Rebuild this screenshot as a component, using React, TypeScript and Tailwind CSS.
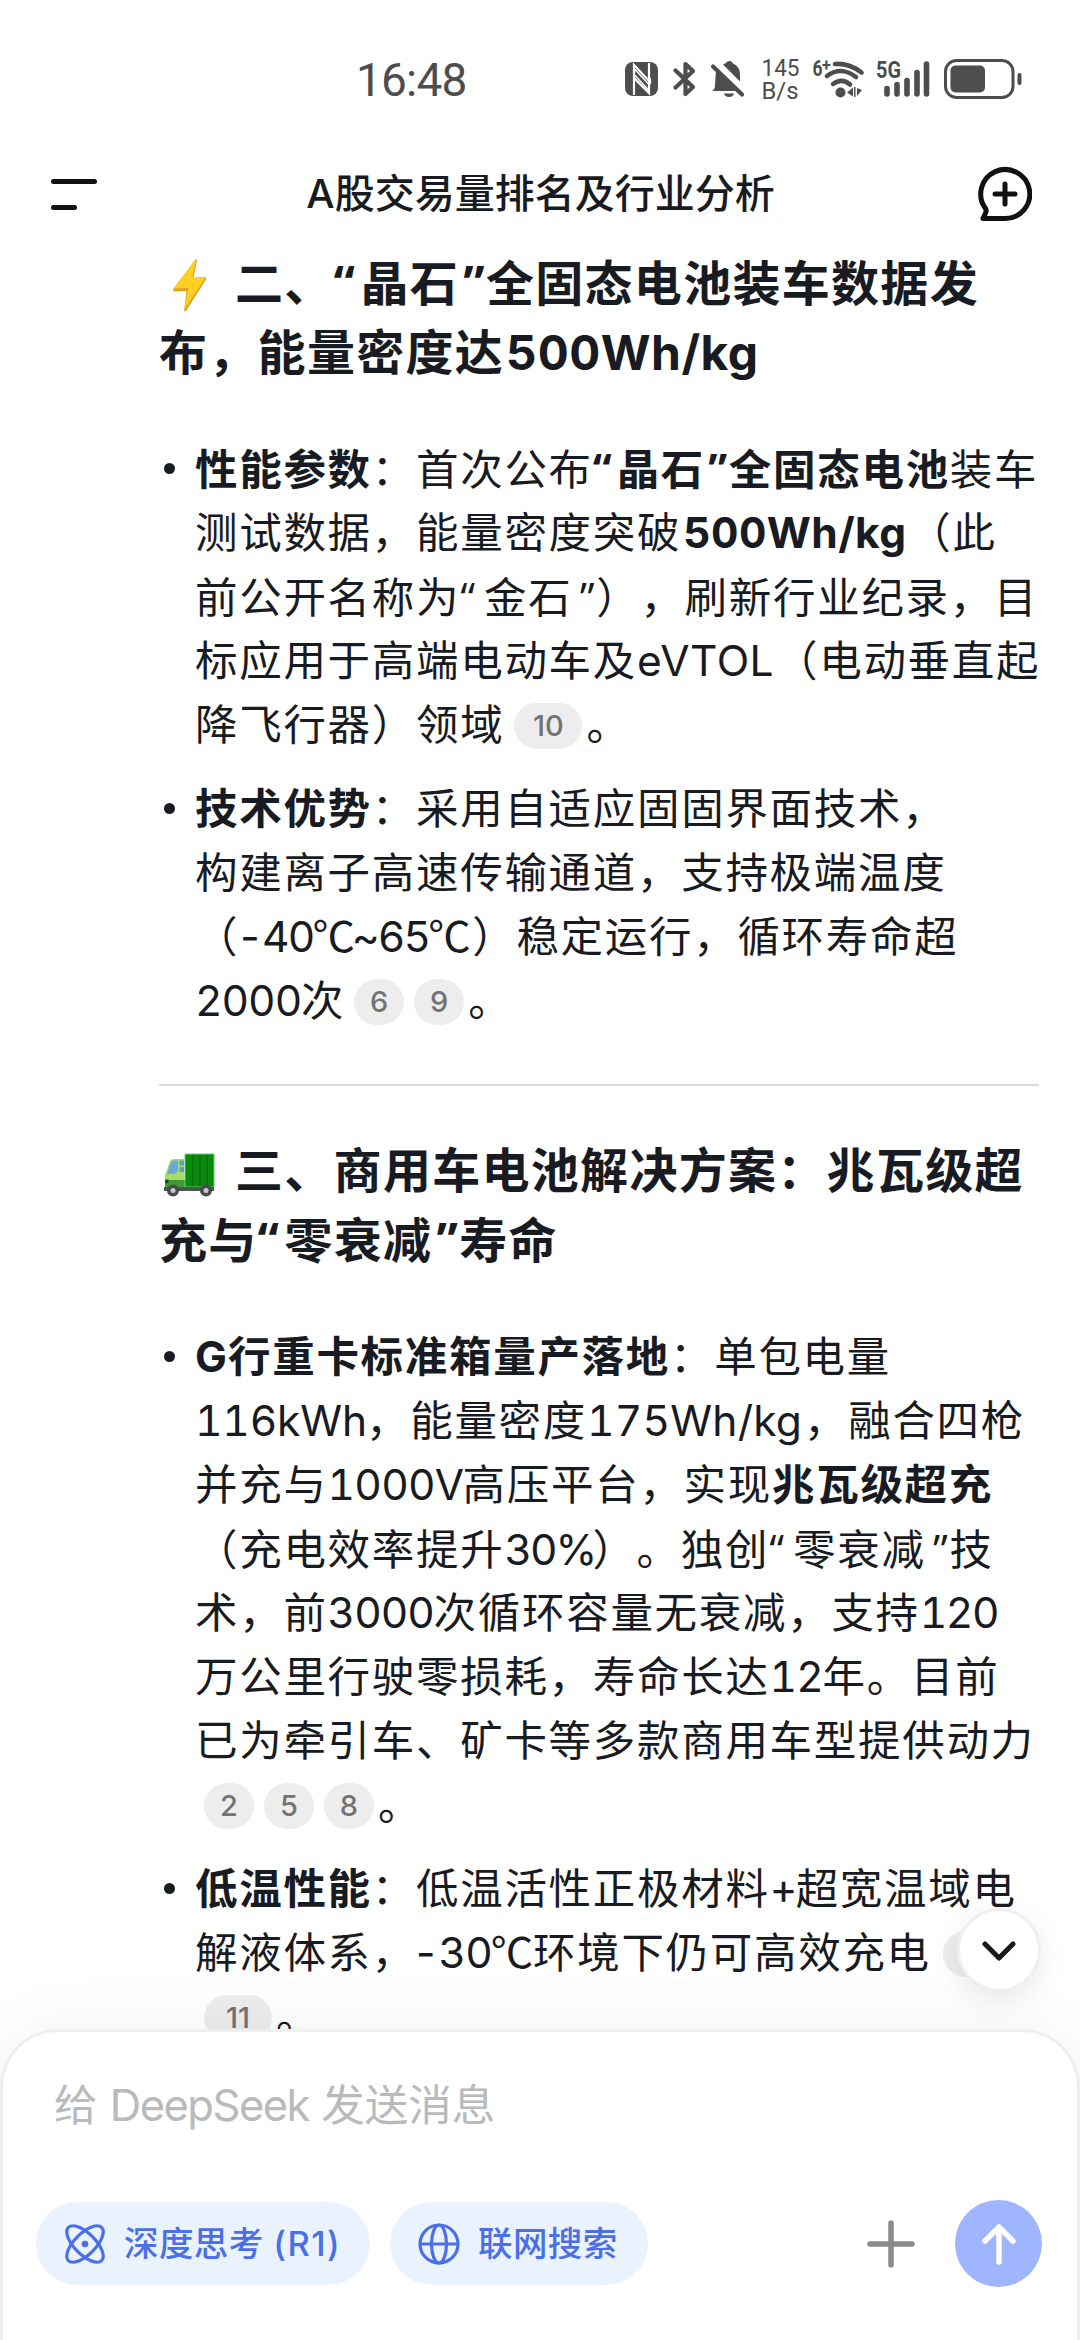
import type { ReactNode } from 'react';

function L({ className, children }: { className: string; children: ReactNode }) {
  return <span className={`inline-block tabular-nums ${className}`}>{children}</span>;
}

const Open = () => <span className="inline-block w-[0.56em] text-left font-['Open_Sans',sans-serif]">“</span>;
const Close = () => <span className="inline-block w-[0.56em] text-right font-['Open_Sans',sans-serif]">”</span>;
const Celsius = () => <span className="-ml-[1px] font-['Noto_Sans_CJK_SC',sans-serif] leading-none tracking-[-3px]">℃</span>;

const B = ({ children }: { children: ReactNode }) => <b className="font-bold">{children}</b>;

function Cite({ n }: { n: string }) {
  return (
    <span
      className={`mr-[10px] inline-flex h-[46px] items-center justify-center rounded-full bg-[#ededed] align-[4px] text-[29px] leading-[46px] font-medium tracking-normal text-[#737373] last:mr-[4px] ${
        n.length > 1 ? 'w-[68px]' : 'w-[50px]'
      }`}
    >
      {n}
    </span>
  );
}

const batteryItems: ReactNode[][] = [
  [
    <><B>性能参数</B>：首次公布<B><Open />晶石<Close />全固态电池</B>装车</>,
    <>测试数据，能量密度突破<B><L className="w-[227px] pl-[2px] tracking-[0.4px]">500Wh/kg</L></B>（此</>,
    <>前公开名称为<Open />金石<Close />），刷新行业纪录，目</>,
    <>标应用于高端电动车及<L className="w-[138px] tracking-[0.5px]">eVTOL</L>（电动垂直起</>,
    <>降飞行器）领域<span className="ml-[10px]"><Cite n="10" /></span>。</>,
  ],
  [
    <><B>技术优势</B>：采用自适应固固界面技术，</>,
    <>构建离子高速传输通道，支持极端温度</>,
    <>（<L className="w-[233px] tracking-[-1.8px]"><span className="-ml-[3px]">-40</span><Celsius />~65<Celsius /></L>）稳定运行，循环寿命超</>,
    <><L className="w-[106px] tracking-[-1px]">2000</L>次<span className="ml-[9px]"><Cite n="6" /><Cite n="9" /></span>。</>,
  ],
];

const truckItems: ReactNode[][] = [
  [
    <><B><L className="w-[33px]">G</L>行重卡标准箱量产落地</B>：单包电量</>,
    <><L className="w-[171px] tracking-[-0.2px]">116kWh</L>，能量密度<L className="w-[217px] tracking-[0.2px]">175Wh/kg</L>，融合四枪</>,
    <>并充与<L className="w-[135px] tracking-[-0.8px]">1000V</L>高压平台，实现<B>兆瓦级超充</B></>,
    <>（充电效率提升<L className="w-[88px] tracking-[-2px]">30%</L>）。独创<Open />零衰减<Close />技</>,
    <>术，前<L className="w-[106px] tracking-[-1px]">3000</L>次循环容量无衰减，支持<L className="w-[76px] tracking-[-1.5px]">120</L></>,
    <>万公里行驶零损耗，寿命长达<L className="w-[53px] tracking-[-1px]">12</L>年。目前</>,
    <>已为牵引车、矿卡等多款商用车型提供动力</>,
    <><span className="ml-[9px]"><Cite n="2" /><Cite n="5" /><Cite n="8" /></span>。</>,
  ],
  [
    <><B>低温性能</B>：低温活性正极材料<L className="w-[26px] tracking-normal">+</L>超宽温域电</>,
    <>解液体系，<L className="w-[117px] tracking-[-1px]"><span className="-ml-[4px]">-30</span><Celsius /></L>环境下仍可高效充电<span className="ml-[12px]"><Cite n="3" /></span></>,
    <><span className="ml-[9px]"><Cite n="11" /></span>。</>,
  ],
];

function BulletList({ items }: { items: ReactNode[][] }) {
  return (
    <ul className="mt-[51px] flex flex-col gap-5">
      {items.map((lines, i) => (
        <li key={i} className="flex text-[42.5px] leading-[64px] tracking-[1.7px]">
          <span className="mt-[26px] ml-[5px] h-[11px] w-[11px] shrink-0 rounded-full bg-[#191b22]" />
          <div className="ml-[20px]">
            {lines.map((line, j) => (
              <p key={j} className="h-16 whitespace-nowrap">{line}</p>
            ))}
          </div>
        </li>
      ))}
    </ul>
  );
}

function BoltIcon() {
  return (
    <svg viewBox="0 0 36 56" className="inline-block h-[56px] w-[36px] align-[-13px]">
      <path d="M24 2L1.500 31.500v3l13-.5L12 54.500l2-.5L34 22.500v-2.500l-12.500 1L25 3z" fill="#e0a31a" />
      <path d="M24 2L1.500 31.500l15-.5L12 53 34 20H20.500z" fill="#fdd023" />
    </svg>
  );
}

function TruckIcon() {
  return (
    <svg viewBox="0 0 52 44" className="inline-block h-[44px] w-[52px] align-[-9px]">
      <path d="M2 34V22L7 8q1-2 3-2h11v30H2z" fill="#a6dc6a" />
      <path d="M2 27h20v8H2z" fill="#3f9c34" />
      <path d="M4 21L8 9q.5-1.500 2-1.500h5V17q-1 4-5 4z" fill="#6aa6dc" />
      <path d="M16.500 7.500h4.500v5h-4.500zM16.500 14h4.500v5h-4.500z" fill="#5a9fc0" />
      <path d="M2 26.500h3.500v3.500H2z" fill="#1d4d22" />
      <path d="M22 1h29v33H22z" fill="#0b8a10" stroke="#6dc96c" strokeWidth="1" />
      <path d="M30 2v31M37 2v31M44 2v31" stroke="#076b0b" strokeWidth="1.300" />
      <path d="M1 34h50v4H1z" fill="#4d5257" />
      <circle cx="10" cy="37.500" r="6" fill="#4a4a4d" />
      <circle cx="10" cy="37.500" r="2.500" fill="#c9c9cc" />
      <circle cx="43" cy="37.500" r="6" fill="#4a4a4d" />
      <circle cx="43" cy="37.500" r="2.500" fill="#c9c9cc" />
    </svg>
  );
}

function StatusBar() {
  return (
    <div className="flex h-[158px] shrink-0 items-start text-[#4d4d4d]">
      <span className="mt-[53px] ml-[356px] w-[269px] font-[Roboto,sans-serif] text-[46px] leading-[54px] tracking-[-0.8px]">16:48</span>
      <div className="mt-[56px] flex h-[46px]">
        <svg viewBox="0 0 400 46" className="h-[46px] w-[400px] overflow-visible" fill="none" stroke="currentColor">
          {/* nfc */}
          <rect x="0" y="6" width="33" height="34" rx="8" fill="currentColor" stroke="none" />
          <path d="M9 39V9l16 17v-4M24 7v30L9 22" stroke="#fff" strokeWidth="2.200" />
          <path d="M9 12.500l15 16M9 18.500l15 16" stroke="#fff" strokeWidth="1.500" />
          {/* bluetooth */}
          <path d="M50.500 14.500L68 31l-7.500 7V8l7.500 7-17.500 16.500" strokeWidth="4.200" strokeLinecap="round" strokeLinejoin="round" />
          {/* muted bell */}
          <path d="M87 35q3-1.500 3-6l1-14.500L112 35zM98 8.500q3-1 4.500-3 2-1 4 0l1.500 2q7 3 7 11v7z" fill="currentColor" stroke="none" />
          <path d="M99 37.500h10q-1 3.500-5 3.500t-5-3.500z" fill="currentColor" stroke="none" />
          <path d="M88 10.500L117 38.500" strokeWidth="4.200" strokeLinecap="round" />
          {/* wifi */}
          <g strokeWidth="4.600" strokeLinecap="round">
            <path d="M210 8q14-1 26.500 8.500" />
            <path d="M202 20q14-10.500 29 1" />
            <path d="M208 28q9-6.500 17 .5" />
          </g>
          <circle cx="215.500" cy="36.500" r="5" fill="currentColor" stroke="none" />
          <path d="M222 36.500l6-5v9zM229 31h1.500v10H229zM232 32l5 2-5 6z" fill="currentColor" stroke="none" />
          {/* signal */}
          <path d="M262 32.500V38M272 28.500V38M282 24.500V38M292 16.500V38M301.500 8V38" strokeWidth="5.600" strokeLinecap="round" />
          {/* battery */}
          <rect x="320.500" y="4.500" width="67.500" height="37" rx="11" strokeWidth="3" />
          <rect x="325.500" y="9.500" width="34.500" height="27" rx="5" fill="currentColor" stroke="none" />
          <rect x="392.500" y="17" width="4" height="12" rx="2" fill="currentColor" stroke="none" />
          <g fill="currentColor" stroke="none" fontFamily="Roboto, sans-serif">
            <text x="136.500" y="20" fontSize="24" textLength="38" lengthAdjust="spacingAndGlyphs">145</text>
            <text x="136.500" y="42.500" fontSize="24" textLength="37" lengthAdjust="spacingAndGlyphs">B/s</text>
            <text x="187.500" y="20" fontSize="22" fontWeight="700" textLength="10" lengthAdjust="spacingAndGlyphs">6</text>
            <text x="197" y="15" fontSize="16" fontWeight="700" textLength="9">+</text>
            <text x="251" y="22" fontSize="24" fontWeight="700" textLength="25" lengthAdjust="spacingAndGlyphs">5G</text>
          </g>
        </svg>
      </div>
    </div>
  );
}

function Header() {
  return (
    <header className="flex h-[72px] shrink-0 items-center justify-between pr-[48px] pl-[51px]">
      <button className="flex w-[54px] flex-col gap-[21px]">
        <span className="h-[5px] w-[46px] rounded-sm bg-[#111]" />
        <span className="h-[5px] w-[26px] rounded-sm bg-[#111]" />
      </button>
      <h1 className="text-[40px] leading-[60px] font-medium text-[#191b22]">A股交易量排名及行业分析</h1>
      <button>
        <svg viewBox="0 0 56 56" className="h-[56px] w-[56px]" fill="none" stroke="#111" strokeWidth="5" strokeLinecap="round" strokeLinejoin="round">
          <path d="M7 52.500H29a24.500 24.500 0 1 0-19.500-10q1 1.500.5 3.500z" />
          <path d="M29 18v20M19 28h20" />
        </svg>
      </button>
    </header>
  );
}

function Composer() {
  return (
    <footer className="relative flex h-[311px] shrink-0 flex-col rounded-t-[58px] border-[3px] border-b-0 border-[#efefef] bg-white shadow-[0_-12px_60px_rgba(0,0,0,0.045)]">
      <button className="absolute -top-[124px] right-[36px] flex h-[84px] w-[84px] items-center justify-center rounded-full border-[3px] border-[#efefef] bg-white shadow-[0_8px_30px_rgba(0,0,0,0.09)]">
        <svg viewBox="0 0 36 22" className="mt-1 h-[22px] w-[36px]" fill="none" stroke="#191919" strokeWidth="5" strokeLinecap="round" strokeLinejoin="round">
          <path d="M4 3l14 14L32 3" />
        </svg>
      </button>
      <p className="mt-[41px] ml-[51px] text-[43.5px] leading-[64px] whitespace-pre text-[#b9babc]">给 <span className="tracking-[-1.5px]">DeepSeek</span> 发送消息</p>
      <div className="mt-[63px] flex items-center pr-[35px] pl-[33px] text-[34.5px] font-medium text-[#4a6fe6]">
        <button className="flex h-[83px] w-[334px] items-center rounded-full bg-[#eaf2fe] pl-[29px] whitespace-pre">
          <svg viewBox="0 0 40 40" className="h-[40px] w-[40px]" fill="none" stroke="currentColor" strokeWidth="3.200">
            <ellipse cx="20" cy="20" rx="23.500" ry="10.500" transform="rotate(45 20 20)" />
            <ellipse cx="20" cy="20" rx="23.500" ry="10.500" transform="rotate(-45 20 20)" />
            <circle cx="20" cy="20" r="3.300" fill="currentColor" stroke="none" />
          </svg>
          <span className="ml-[19px] tracking-[0.4px]">深度思考 <span className="tracking-[1.5px]">(R1)</span></span>
        </button>
        <button className="ml-[20px] flex h-[83px] w-[258px] items-center rounded-full bg-[#eaf2fe] pl-[28px]">
          <svg viewBox="0 0 42 42" className="h-[42px] w-[42px]" fill="none" stroke="currentColor" strokeWidth="3.200">
            <circle cx="21" cy="21" r="19" />
            <ellipse cx="21" cy="21" rx="7.500" ry="19" />
            <path d="M2 21h38" />
          </svg>
          <span className="ml-[18px] tracking-[0.4px]">联网搜索</span>
        </button>
        <svg viewBox="0 0 48 48" className="ml-auto h-[48px] w-[48px]" stroke="#8a8a8a" strokeWidth="5.500" strokeLinecap="round">
          <path d="M24 3v42M3 24h42" />
        </svg>
        <button className="ml-[40px] flex h-[87px] w-[87px] items-center justify-center rounded-full bg-[#a0b5ff]">
          <svg viewBox="0 0 34 42" className="h-[42px] w-[34px]" fill="none" stroke="#fff" strokeWidth="5.500" strokeLinecap="round" strokeLinejoin="round">
            <path d="M17 39V4M3 18L17 4l14 14" />
          </svg>
        </button>
      </div>
    </footer>
  );
}

export default function App() {
  return (
    <div className="flex h-[2340px] w-[1080px] flex-col overflow-hidden bg-white font-[Inter,'Noto_Sans_CJK_SC',sans-serif] [text-spacing-trim:space-all]">
      <StatusBar />
      <Header />
      <main className="min-h-0 flex-1 overflow-hidden pt-[18px] pr-[41px] pl-[159px] text-[#191b22]">
        <h2 className="h-[138px] text-[48px] leading-[69px] font-bold tracking-[1.3px] whitespace-nowrap">
          <span className="inline-block h-[69px] w-[76px] pl-[13px] align-top"><BoltIcon /></span>二、<Open />晶石<Close />全固态电池装车数据发
          <br />
          布，能量密度达<span className="pl-[2px] tracking-[0.5px] tabular-nums">500Wh/kg</span>
        </h2>
        <BulletList items={batteryItems} />
        <hr className="mt-[51px] mb-[50px] border-t-[2px] border-[#dadada]" />
        <h2 className="h-[138px] text-[48px] leading-[69px] font-bold tracking-[1.3px] whitespace-nowrap">
          <span className="inline-block h-[69px] w-[76px] pl-[4px] align-top"><TruckIcon /></span>三、商用车电池解决方案：兆瓦级超
          <br />
          充与<Open />零衰减<Close />寿命
        </h2>
        <BulletList items={truckItems} />
      </main>
      <Composer />
    </div>
  );
}
